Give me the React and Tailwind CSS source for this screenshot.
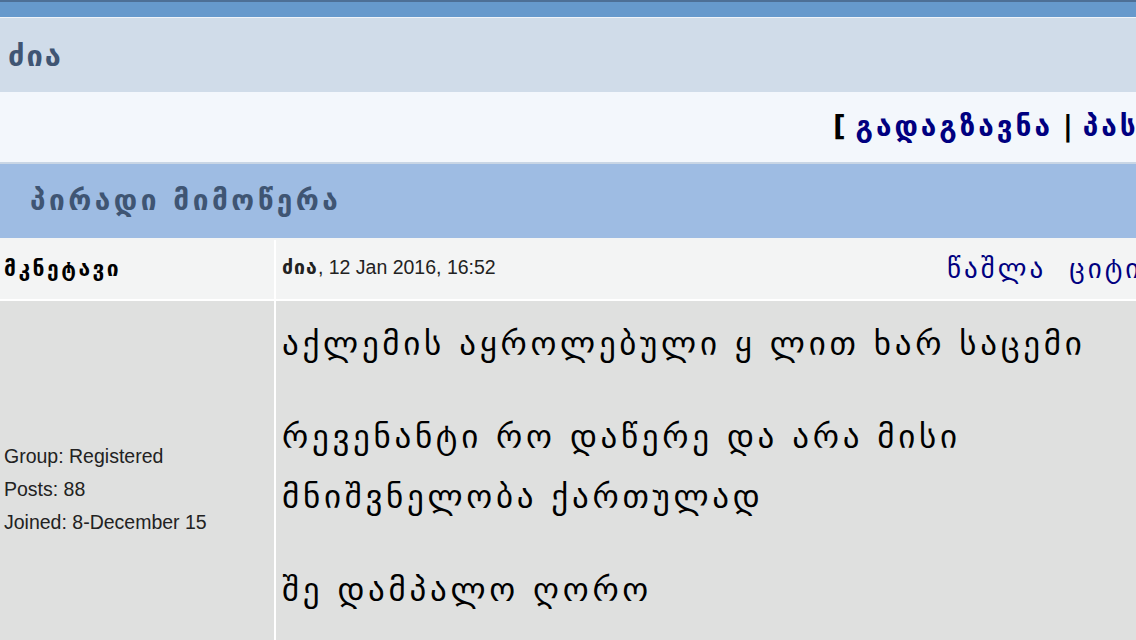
import React from 'react';

const geo = { fontFamily: '"DejaVu Sans", "Noto Sans", sans-serif' };
const latin = { fontFamily: '"Liberation Sans", Arial, sans-serif' };

const App = () => {
  return (
    <div className="w-[1136px] h-[640px] overflow-hidden bg-[#dfe0df]">
      <div className="h-[17px] bg-[#6699cc] border-t-2 border-[#4d6f96]"></div>
      <div className="h-px bg-[#eef3f9]"></div>
      <div className="h-[74px] bg-[#d0dce9] flex items-center pl-2">
        <span className="text-[29px] font-bold text-[#3f5573] tracking-[2px] mt-1" style={geo}>ძია</span>
      </div>
      <div className="h-[72px] bg-[#f3f7fc] border-b-2 border-[#c9d6e5] flex items-center pl-[833px] whitespace-nowrap overflow-hidden">
        <span className="text-[28px] font-bold text-black" style={geo}>
          [ <span className="text-[#000080] tracking-[3px]">გადაგზავნა</span> | <span className="text-[#000080] tracking-[3px]">პასუხი</span> ]
        </span>
      </div>
      <div className="h-[76px] bg-[#9ebce3] flex items-center pl-[30px] border-b-2 border-[#f3f4f4]">
        <span className="text-[28px] font-bold text-[#3f5573] tracking-[3.5px]" style={geo}>პირადი მიმოწერა</span>
      </div>
      <div className="flex h-[61px] bg-[#f3f4f4] border-b-2 border-white">
        <div className="w-[276px] shrink-0 flex items-center pl-1 border-r-2 border-white">
          <span className="text-[21px] font-bold text-black tracking-[2.5px]" style={geo}>მკნეტავი</span>
        </div>
        <div className="flex-1 min-w-0 overflow-hidden flex items-center pl-[6px] whitespace-nowrap">
          <span className="w-[665px] shrink-0 text-[19.5px] text-[#222] -mt-1" style={latin}>
            <b className="tracking-[1px]" style={geo}>ძია</b>, 12 Jan 2016, 16:52
          </span>
          <span className="shrink-0 text-[27px] text-[#000080] tracking-[3px]" style={geo}>
            წაშლა&nbsp;&nbsp;ციტირება
          </span>
        </div>
      </div>
      <div className="flex">
        <div className="w-[276px] shrink-0 border-r-2 border-white pt-[139px] pl-1 h-[360px] text-[19.5px] text-[#222] leading-[33px]" style={latin}>
          <div>Group: Registered</div>
          <div>Posts: 88</div>
          <div>Joined: 8-December 15</div>
        </div>
        <div className="flex-1 pl-[6px] pt-[13px] text-[33px] text-black leading-[60px] tracking-[3.7px]" style={geo}>
          <p>აქლემის აყროლებული ყ ლით ხარ საცემი</p>
          <p className="mt-[33px]">რევენანტი რო დაწერე და არა მისი მნიშვნელობა ქართულად</p>
          <p className="mt-[33px]">შე დამპალო ღორო</p>
        </div>
      </div>
    </div>
  );
};

export default App;
